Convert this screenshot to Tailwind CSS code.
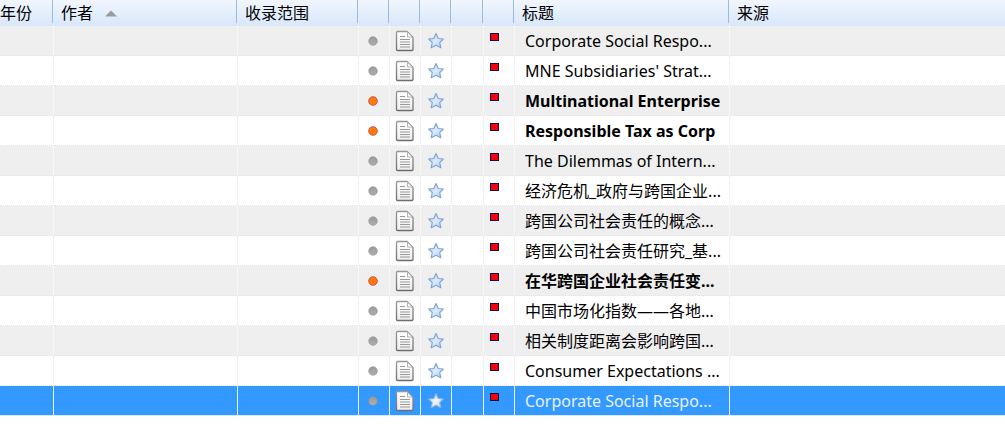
<!DOCTYPE html>
<html lang="zh-CN">
<head>
<meta charset="utf-8">
<title>文献列表</title>
<script src="https://cdn.jsdelivr.net/npm/@tailwindcss/browser@4"></script>
</head>
<body class="bg-white text-black text-base font-['Noto_Sans','Noto_Sans_CJK_SC',sans-serif] overflow-x-hidden">
<svg class="absolute size-0" aria-hidden="true">
  <defs>
    <linearGradient id="dotGray" x1="0" y1="0" x2="0" y2="1"><stop offset="0" stop-color="#999"/><stop offset="1" stop-color="#b0b0b0"/></linearGradient>
    <linearGradient id="page" x1="0" y1="0" x2="0" y2="1"><stop offset="0" stop-color="#ffffff"/><stop offset="1" stop-color="#ededed"/></linearGradient>
    <linearGradient id="edge" x1="0" y1="0" x2="0" y2="1"><stop offset="0" stop-color="#999999"/><stop offset="1" stop-color="#6e6e6e"/></linearGradient>
    <linearGradient id="starBlue" x1="0" y1="0" x2="1" y2="1"><stop offset="0" stop-color="#a9caf2"/><stop offset=".5" stop-color="#dcebfb"/><stop offset="1" stop-color="#a0c4ee"/></linearGradient>
    <linearGradient id="starSel" x1="0" y1="0" x2="1" y2="1"><stop offset="0" stop-color="#b9d9f8"/><stop offset=".5" stop-color="#f0f4f8"/><stop offset="1" stop-color="#bcd4ec"/></linearGradient>
    <symbol id="i-dot" viewBox="0 0 12 12"><circle cx="6" cy="6" r="4.3" fill="url(#dotGray)" stroke="#909090" stroke-width=".6"/></symbol>
    <symbol id="i-new" viewBox="0 0 12 12"><circle cx="6" cy="6" r="4.3" fill="#ff7a00" stroke="#cf5560" stroke-width="1"/></symbol>
    <symbol id="i-doc" viewBox="0 0 20 22">
      <path d="M2.5 1.5H12L18 7.500V19.500Q18 20.500 17 20.500H2.500Q1.500 20.500 1.500 19.500V2.500Q1.500 1.500 2.500 1.500Z" fill="url(#page)" stroke="url(#edge)" stroke-width="1.300"/>
      <path d="M12.500 2.500V7H17" fill="#fff" stroke="#b5b5b5" stroke-width="1"/>
      <path d="M5 6.500H10M5 9.500H15M5 12H15M5 14.500H15M5 17H15" stroke="#9a9a9a" stroke-width="1.100"/>
    </symbol>
    <symbol id="i-star" viewBox="0 0 18 18"><path d="M9 1.500L11.200 6.500L16.300 7L12.700 10.600L13.900 15.800L9 13.200L4.100 15.800L5.300 10.600L1.700 7L6.800 6.500Z" fill="url(#starBlue)" stroke="#7fa3d4" stroke-width="1.100" stroke-linejoin="round"/></symbol>
    <symbol id="i-star-sel" viewBox="0 0 18 18"><path d="M9 1.500L11.200 6.500L16.300 7L12.700 10.600L13.900 15.800L9 13.200L4.100 15.800L5.300 10.600L1.700 7L6.800 6.500Z" fill="url(#starSel)" stroke="#8fb3d9" stroke-width="1.100" stroke-linejoin="round"/></symbol>
  </defs>
</svg>

<table class="w-full table-fixed border-separate border-spacing-0">
  <colgroup>
    <col class="w-[54px]"><col class="w-[184px]"><col class="w-[121px]"><col class="w-[31px]"><col class="w-[31px]"><col class="w-[31px]"><col class="w-[32px]"><col class="w-[31px]"><col class="w-[215px]"><col>
  </colgroup>
  <thead>
    <tr class="h-[26px] bg-linear-to-b from-[#f1f6fe] to-[#d8e7fb] text-left align-top">
      <th class="p-0 font-normal"><div class="mr-px flex h-[23px] items-center border-r border-[#9dbbe2] pt-[3px]"><button class="whitespace-nowrap">年份</button></div></th>
      <th class="p-0 font-normal" aria-sort="ascending"><div class="mr-px flex h-[23px] items-center border-r border-[#9dbbe2] pl-[7px] pt-[3px]"><button class="flex items-center gap-3 whitespace-nowrap">作者 <svg class="h-[7px] w-3" viewBox="0 0 12 7"><path d="M6 .5L12 6.500H0Z" fill="#9b9b9b"/></svg></button></div></th>
      <th class="p-0 font-normal"><div class="mr-px flex h-[23px] items-center border-r border-[#9dbbe2] pl-[7px] pt-[3px]"><button class="whitespace-nowrap">收录范围</button></div></th>
      <th class="p-0"><div class="mr-px h-[23px] border-r border-[#9dbbe2]"></div></th>
      <th class="p-0"><div class="mr-px h-[23px] border-r border-[#9dbbe2]"></div></th>
      <th class="p-0"><div class="mr-px h-[23px] border-r border-[#9dbbe2]"></div></th>
      <th class="p-0"><div class="mr-px h-[23px] border-r border-[#9dbbe2]"></div></th>
      <th class="p-0"><div class="mr-px h-[23px] border-r border-[#9dbbe2]"></div></th>
      <th class="p-0 font-normal"><div class="mr-px flex h-[23px] items-center border-r border-[#9dbbe2] pl-[7px] pt-[3px]"><button class="whitespace-nowrap">标题</button></div></th>
      <th class="p-0 font-normal"><div class="flex h-[23px] items-center pl-[7px] pt-[3px]"><button class="whitespace-nowrap">来源</button></div></th>
    </tr>
  </thead>
  <tbody id="rows"></tbody>
</table>

<script>
const items = [
  ["Corporate Social Respo..."],
  ["MNE Subsidiaries' Strat..."],
  ["Multinational Enterprise", "unread"],
  ["Responsible Tax as Corp", "unread"],
  ["The Dilemmas of Intern..."],
  ["经济危机_政府与跨国企业..."],
  ["跨国公司社会责任的概念..."],
  ["跨国公司社会责任研究_基..."],
  ["在华跨国企业社会责任变...", "unread"],
  ["中国市场化指数——各地..."],
  ["相关制度距离会影响跨国..."],
  ["Consumer Expectations ..."],
  ["Corporate Social Respo...", "selected"]
];
document.getElementById("rows").innerHTML = items.map(([title, state], i) => {
  const sel = state === "selected", unread = state === "unread";
  const row = sel ? "bg-[#3399ff] text-[#e6f2ff]" : i % 2 ? "bg-white" : "bg-[#efefef]";
  const line = sel ? "border-b border-r border-b-[#d6e9ff] border-r-[#e4f1ff] p-0" : i % 2 ? "border-b border-r border-dotted border-[#e6e6e6] p-0" : "border-b border-r border-dotted border-b-[#e6e6e6] border-r-white p-0";
  const last = sel ? "border-b border-[#d6e9ff] p-0" : "border-b border-dotted border-[#e6e6e6] p-0";
  const blank = `<td class="${line}"></td>`;
  return `<tr class="h-[30px] ${row}">${blank.repeat(3)}
    <td class="${line}"><svg class="ml-2 size-3" role="img" aria-label="${unread ? "未读" : "已读"}"><use href="${unread ? "#i-new" : "#i-dot"}"/></svg></td>
    <td class="${line}"><svg class="mx-auto h-[22px] w-5" role="img" aria-label="文档"><use href="#i-doc"/></svg></td>
    <td class="${line}"><button class="mx-auto block" aria-label="收藏"><svg class="size-[18px]"><use href="${sel ? "#i-star-sel" : "#i-star"}"/></svg></button></td>
    ${blank}
    <td class="${line} align-top"><div class="ml-1.5 mt-[7px] h-2 w-[9px] border border-[#101048] bg-[#f80008]"></div></td>
    <td class="${line}"><div class="ml-2.5 mr-1 overflow-hidden whitespace-nowrap leading-6 ${unread ? "font-bold" : ""}">${title}</div></td>
    <td class="${last}"></td></tr>`;
}).join("");
</script>
</body>
</html>
